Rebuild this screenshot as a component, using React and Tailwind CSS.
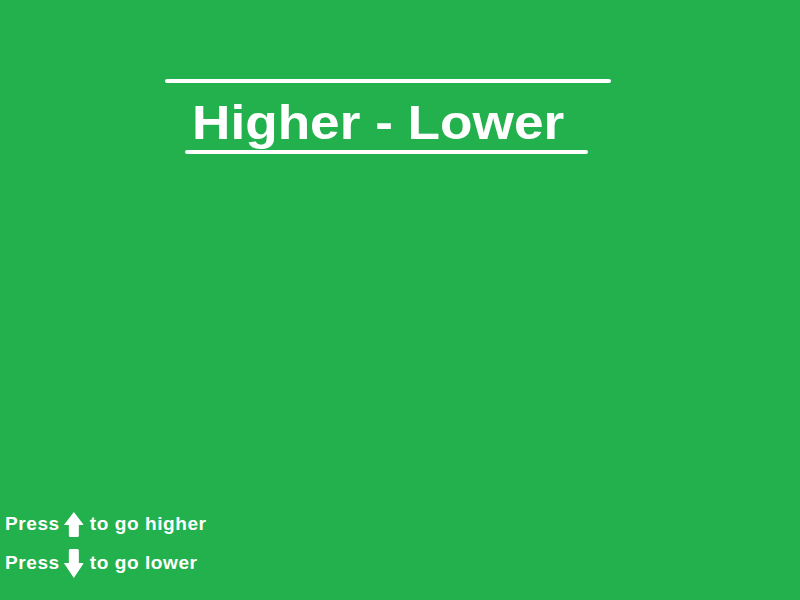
export default function App() {
  return (
    <div className="w-[800px] h-[600px] overflow-hidden bg-[#22b14c] flex flex-col text-white font-['Liberation_Sans',Arial,sans-serif]">
      <div className="mt-[79px] ml-[165px] w-[446px] h-[4px] rounded-full bg-white" />
      <div className="mt-[15px] ml-[192px] text-[49px] font-bold leading-[49px] whitespace-nowrap origin-left scale-x-[1.085]">
        Higher - Lower
      </div>
      <div className="mt-[3px] ml-[185px] w-[403px] h-[4px] rounded-full bg-white" />
      <div className="mt-auto mb-[22px] ml-[5px] w-fit flex flex-col gap-[12px] text-[17.5px] font-bold leading-none tracking-[0.5px] whitespace-nowrap origin-left scale-x-[1.09]">
        <div className="flex items-center h-[25px]">
          <span className="w-[54px]">Press</span>
          <svg className="mr-[5.5px]" width="18.35" height="25" viewBox="0 0 20 25" preserveAspectRatio="none">
            <path d="M10 0 L20 13 L15 13 L15 23.5 Q15 25 13.5 25 L6.5 25 Q5 25 5 23.5 L5 13 L0 13 Z" fill="white" />
          </svg>
          <span>to go higher</span>
        </div>
        <div className="flex items-center h-[29px]">
          <span className="w-[54px]">Press</span>
          <svg className="mr-[5.5px]" width="18.35" height="29" viewBox="0 0 20 29" preserveAspectRatio="none">
            <path d="M6.5 0 L13.5 0 Q15 0 15 1.5 L15 14 L20 14 L10 29 L0 14 L5 14 L5 1.5 Q5 0 6.5 0 Z" fill="white" />
          </svg>
          <span>to go lower</span>
        </div>
      </div>
    </div>
  );
}
